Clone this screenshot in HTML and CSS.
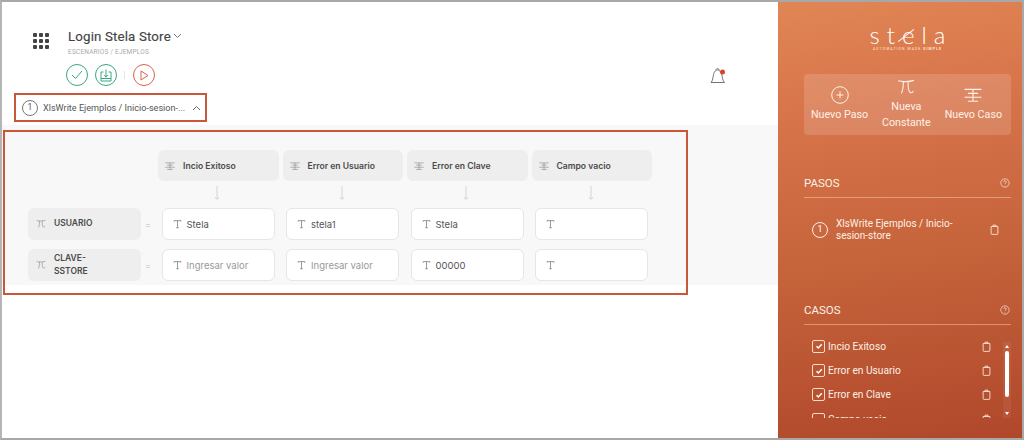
FILE: index.html
```html
<!DOCTYPE html>
<html lang="es">
<head>
<meta charset="utf-8">
<title>Login Stela Store</title>
<link rel="stylesheet" href="styles.css">
</head>
<body>
<svg class="defs" width="0" height="0">
  <defs>
    <symbol id="case" viewBox="0 0 16 16"><path d="M.5 3h15M3.500 6.500h9M.5 10h15M3.500 13.500h9M8 3v10.500" fill="none" stroke="currentColor" stroke-width="1"/></symbol>
    <symbol id="pi" viewBox="0 0 16 16"><path d="M1 2.500c3 1 10 1 14-.4M5.500 3c.2 4-.3 8-1.600 10.500M10 3c-.3 4 0 9 2 10 1 .4 2-.5 2.500-1.500" fill="none" stroke="currentColor" stroke-width="1"/></symbol>
    <symbol id="t" viewBox="0 0 12 12"><path d="M1.500 3V1.500h9V3M6 1.500v9.500M4.300 11h3.400" fill="none" stroke="currentColor" stroke-width="1"/></symbol>
    <symbol id="trash" viewBox="0 0 12 14"><path d="M1.500 3h9v9.500a1 1 0 0 1-1 1h-7a1 1 0 0 1-1-1zM4 3V1.200h4V3" fill="none" stroke="currentColor" stroke-width="1.100"/></symbol>
    <symbol id="help" viewBox="0 0 12 12"><circle cx="6" cy="6" r="5" fill="none" stroke="currentColor" stroke-width=".8"/><path d="M4.600 4.700a1.400 1.400 0 1 1 2.200 1.200c-.6.400-.8.600-.8 1.200M6 8.300v.7" fill="none" stroke="currentColor" stroke-width=".8"/></symbol>
    <symbol id="arrow" viewBox="0 0 8 16"><path d="M4 1v13M2 12l2 2.500L6 12" fill="none" stroke="currentColor" stroke-width=".8"/></symbol>
    <symbol id="check" viewBox="0 0 10 10"><path d="M2.500 5.200l1.800 1.800 3.500-3.800" fill="none" stroke="currentColor" stroke-width="1.500"/></symbol>
  </defs>
</svg>
<div class="frame">
  <main class="main">
    <header class="head">
      <div class="title-row">
        <div class="apps"><i></i><i></i><i></i><i></i><i></i><i></i><i></i><i></i><i></i></div>
        <div class="title-block">
          <h1 class="title">Login Stela Store<svg class="chev" width="9" height="6" viewBox="0 0 9 6"><path d="M1 1l3.500 3.500L8 1" fill="none" stroke="currentColor"/></svg></h1>
          <p class="crumb">ESCENARIOS / EJEMPLOS</p>
        </div>
      </div>
      <div class="actions">
        <span class="round green"><svg width="12" height="10" viewBox="0 0 12 10"><path d="M1 5l3.500 3.500L11 1" fill="none" stroke="currentColor"/></svg></span>
        <span class="round green"><svg width="12" height="13" viewBox="0 0 12 13"><path d="M3.500 3H1v9h10V3H8.500M6 .5V8M3.800 6L6 8.200 8.200 6M1 9.500h10" fill="none" stroke="currentColor"/></svg></span>
        <span class="sep"></span>
        <span class="round red"><svg width="9" height="11" viewBox="0 0 9 11"><path d="M1 1l7 4.500L1 10z" fill="none" stroke="currentColor"/></svg></span>
        <span class="bell"><svg width="17" height="18" viewBox="0 0 17 18"><path d="M1 15.500c2-2 1.800-5 2.500-8C4.200 4.500 5.800 3 7.500 3s3.500 1.500 4.300 4.500c.8 3 .6 6 2.700 8zM6 3c0-2 3-2 3 0" fill="none" stroke="#666" stroke-width=".9"/><circle cx="12.500" cy="5" r="2.500" fill="#d8432c"/></svg></span>
      </div>
      <div class="step-pick">
        <span class="num">1</span>
        <span class="step-name">XlsWrite Ejemplos / Inicio-sesion-...</span>
        <svg width="9" height="6" viewBox="0 0 9 6"><path d="M1 5l3.500-3.500L8 5" fill="none" stroke="#666"/></svg>
      </div>
    </header>
    <section class="board">
      <div class="outline"></div>
      <div class="grid">
        <span></span>
        <div class="case"><svg class="ico"><use href="#case"/></svg>Incio Exitoso</div>
        <div class="case"><svg class="ico"><use href="#case"/></svg>Error en Usuario</div>
        <div class="case"><svg class="ico"><use href="#case"/></svg>Error en Clave</div>
        <div class="case"><svg class="ico"><use href="#case"/></svg>Campo vacio</div>

        <span></span>
        <svg class="down"><use href="#arrow"/></svg>
        <svg class="down"><use href="#arrow"/></svg>
        <svg class="down"><use href="#arrow"/></svg>
        <svg class="down"><use href="#arrow"/></svg>

        <div class="label-wrap"><div class="var"><svg class="ico"><use href="#pi"/></svg><span>USUARIO</span></div><b class="eq">=</b></div>
        <div class="cell"><svg class="tico"><use href="#t"/></svg>Stela</div>
        <div class="cell"><svg class="tico"><use href="#t"/></svg>stela1</div>
        <div class="cell"><svg class="tico"><use href="#t"/></svg>Stela</div>
        <div class="cell"><svg class="tico"><use href="#t"/></svg></div>

        <div class="label-wrap"><div class="var"><svg class="ico"><use href="#pi"/></svg><span>CLAVE-<br>SSTORE</span></div><b class="eq">=</b></div>
        <div class="cell hint"><svg class="tico"><use href="#t"/></svg>Ingresar valor</div>
        <div class="cell hint"><svg class="tico"><use href="#t"/></svg>Ingresar valor</div>
        <div class="cell"><svg class="tico"><use href="#t"/></svg>00000</div>
        <div class="cell"><svg class="tico"><use href="#t"/></svg></div>
      </div>
    </section>
  </main>
  <aside class="side">
    <div class="logo">
      <div class="logo-word">st<span class="logo-e">e</span>la</div>
      <div class="logo-tag">AUTOMATION MADE <b>SIMPLE</b></div>
    </div>
    <div class="tools">
      <div class="tool"><svg width="18" height="18" viewBox="0 0 18 18"><circle cx="9" cy="9" r="8.300" fill="none" stroke="currentColor"/><path d="M9 5.500v7M5.500 9h7" stroke="currentColor"/></svg><span>Nuevo Paso</span></div>
      <div class="tool"><svg width="18" height="18"><use href="#pi"/></svg><span>Nueva<br>Constante</span></div>
      <div class="tool"><svg width="18" height="18"><use href="#case"/></svg><span>Nuevo Caso</span></div>
    </div>
    <div class="sec sec-steps">
      <span>PASOS</span><svg class="help"><use href="#help"/></svg>
    </div>
    <div class="step">
      <span class="num light">1</span>
      <span class="step-text">XlsWrite Ejemplos / Inicio-<br>sesion-store</span>
      <svg class="trash"><use href="#trash"/></svg>
    </div>
    <div class="sec sec-cases">
      <span>CASOS</span><svg class="help"><use href="#help"/></svg>
    </div>
    <div class="cases">
      <ul class="case-list">
        <li><span class="box"><svg width="10" height="10"><use href="#check"/></svg></span><span class="cname">Incio Exitoso</span><svg class="trash"><use href="#trash"/></svg></li>
        <li><span class="box"><svg width="10" height="10"><use href="#check"/></svg></span><span class="cname">Error en Usuario</span><svg class="trash"><use href="#trash"/></svg></li>
        <li><span class="box"><svg width="10" height="10"><use href="#check"/></svg></span><span class="cname">Error en Clave</span><svg class="trash"><use href="#trash"/></svg></li>
        <li><span class="box"></span><span class="cname">Campo vacio</span><svg class="trash"><use href="#trash"/></svg></li>
      </ul>
      <div class="scroll"><i class="up"></i><i class="thumb"></i><i class="dn"></i></div>
    </div>
  </aside>
</div>
</body>
</html>
```
FILE: styles.css
```css
* { box-sizing: border-box; }
html, body { margin: 0; height: 100%; overflow: hidden; }
body { font-family: "Inter", "Liberation Sans", sans-serif; background: #fff; color: #444; }
.defs { position: absolute; }
.frame { display: flex; width: 1024px; height: 440px; border-top: 2px solid #a8a8a8; border-left: 2px solid #b5b5b5; border-right: 2px solid #a8a8a8; border-bottom: 2px solid #a8a8a8; overflow: hidden; }
.main { width: 776px; flex: none; background: #fff; }
.head { height: 123px; padding: 26px 0 0 12px; position: relative; }
.title-row { display: flex; gap: 19px; padding-left: 19px; }
.apps { display: grid; grid-template-columns: repeat(3, 4px); gap: 2px; padding-top: 5px; align-content: start; }
.apps i { width: 4px; height: 4px; background: #444; border-radius: 1px; }
.title { margin: 0; font: 400 13.300px/17px "Roboto", sans-serif; letter-spacing: .15px; color: #444; -webkit-text-stroke: .15px #444; }
.chev { color: #777; vertical-align: 2px; margin-left: 2px; }
.crumb { margin: 3px 0 0; font: 400 6.500px/8px "Roboto", sans-serif; color: #aaa; letter-spacing: .2px; }
.actions { display: flex; align-items: center; margin: 8px 0 0 52px; position: relative; }
.round { width: 22px; height: 22px; border-radius: 50%; border: 1px solid; display: flex; align-items: center; justify-content: center; margin-right: 7px; }
.green { color: #3aa77f; }
.red { color: #d9634c; margin-right: 0; }
.sep { width: 1px; height: 8px; background: #e4e4e4; margin: 0 8px 0 0; }
.bell { position: absolute; left: 644px; top: 3px; line-height: 0; }
.step-pick { display: flex; align-items: center; gap: 5px; width: 193px; height: 29px; margin-top: 7px; border: 2px solid #c9573a; padding-left: 6px; }
.num { width: 16px; height: 16px; flex: none; border: 1px solid #777; border-radius: 50%; display: flex; align-items: center; justify-content: center; font: 400 8.500px/1 "Roboto", sans-serif; color: #555; }
.step-name { font: 400 9.100px/12px "Roboto", sans-serif; color: #555; white-space: nowrap; flex: none; width: 144px; overflow: hidden; }
.board { height: 160px; background: #f8f8f8; position: relative; padding: 25px 0 0 26px; }
.outline { position: absolute; left: 1px; top: 5px; width: 685px; height: 165px; border: 2px solid #c9573a; }
.grid { display: grid; grid-template-columns: 130px repeat(4, 124.500px); grid-template-rows: 31px 27px 41px 32px; }
.grid > :nth-child(n+11):nth-child(-n+15) { margin-bottom: 9px; }
.case { margin-right: 4px; background: #eeeeee; border-radius: 6px; display: flex; align-items: center; gap: 8px; padding-left: 7px; font-size: 8.600px; font-weight: 600; color: #4a4a4a; white-space: nowrap; }
.ico { width: 10px; height: 10px; color: #888; flex: none; }
.down { width: 8px; height: 16px; color: #ccc; justify-self: center; margin: 4px 6px 0 0; }
.label-wrap { display: flex; align-items: stretch; }
.var { width: 113px; background: #eeeeee; border-radius: 6px; display: flex; align-items: center; gap: 8px; padding-left: 8px; font-size: 8.500px; line-height: 13.500px; font-weight: 600; color: #4a4a4a; }
.eq { font-weight: 400; font-size: 9px; color: #d0d0d0; margin-left: 4px; align-self: center; }
.cell { width: 113px; margin-left: 3.500px; background: #fff; border: 1px solid #e6e6e6; border-radius: 6px; display: flex; align-items: center; gap: 5px; padding-left: 10px; font-size: 9.500px; color: #555; }
.hint { color: #999; }
.tico { width: 9px; height: 10px; color: #777; flex: none; }
.side { flex: none; width: 244px; color: #fdf0e6; padding: 0 0 0 26px; background: linear-gradient(172deg, #e08655 0%, #d8744a 25%, #c4623a 60%, #b0472b 100%); font-family: "Roboto", sans-serif; }
.logo { width: 207px; height: 72px; padding-top: 21px; text-align: center; }
.logo-word { font: 300 24px/24px "Lato", sans-serif; letter-spacing: 7px; padding-left: 7px; color: #fff; white-space: nowrap; }
.logo-e { position: relative; }
.logo-e::after { content: ""; position: absolute; left: -6px; top: 15px; width: 20px; height: 1px; background: #fff; transform: rotate(-38deg); }
.logo-tag { font: 400 3.500px/5px "Roboto", sans-serif; letter-spacing: 1.050px; color: #ffe9dc; white-space: nowrap; }
.tools { width: 207px; height: 61px; background: rgba(255,255,255,.15); border-radius: 4px; display: flex; justify-content: space-between; padding: 0 9px 0 7px; }
.tool { display: flex; flex-direction: column; align-items: center; justify-content: center; gap: 3px; font-size: 10.700px; line-height: 16px; text-align: center; white-space: nowrap; color: #fff1e7; }
.tool svg { flex: none; }
.sec { width: 207px; display: flex; justify-content: space-between; align-items: center; font-size: 11.500px; border-bottom: 1px solid rgba(255,220,200,.45); height: 24px; padding-bottom: 6px; }
.sec-steps { margin-top: 39px; }
.sec-cases { margin-top: 59px; }
.help { width: 10px; height: 10px; margin-right: 1px; }
.step { width: 207px; display: flex; align-items: center; margin-top: 19px; padding-left: 8px; height: 25px; font-size: 10px; line-height: 12px; }
.num.light { width: 16px; height: 16px; border-color: #fdf0e6; color: #fff; margin-right: 8px; font-size: 9px; }
.step-text { flex: 1; }
.trash { width: 9px; height: 11px; flex: none; margin-right: 12px; }
.cases { display: flex; width: 207px; margin-top: 9px; height: 84px; overflow: hidden; padding-left: 8px; }
.case-list { list-style: none; margin: 0; padding: 0; flex: 1; }
.case-list li { display: flex; align-items: center; height: 24.400px; font-size: 10.200px; }
.box { width: 13px; height: 13px; border: 1px solid #fbdcc8; border-radius: 2px; display: flex; align-items: center; justify-content: center; margin-right: 3px; color: #fff; }
.cname { flex: 1; }
.scroll { width: 8px; height: 76px; flex: none; margin-top: 8px; display: flex; flex-direction: column; align-items: center; background: rgba(255,255,255,.06); }
.scroll i { display: block; flex: none; }
.up { width: 0; height: 0; margin-top: 3px; border: 2px solid transparent; border-top: 0; border-bottom: 3px solid #fff; }
.thumb { width: 4px; height: 46px; margin: 3px 0 0; background: #fff; border-radius: 2px; }
.dn { width: 0; height: 0; margin-top: 15px; border: 2px solid transparent; border-bottom: 0; border-top: 3px solid #fff; }
```
